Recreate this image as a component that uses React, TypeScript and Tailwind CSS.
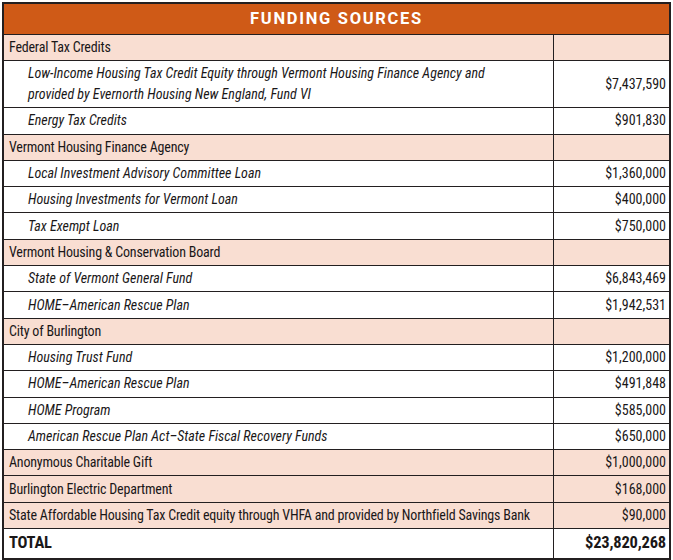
type Row = {
  label: string;
  amount?: string;
  kind: "group" | "item" | "solo";
  tall?: boolean;
};

const rows: Row[] = [
  { label: "Federal Tax Credits", kind: "group" },
  {
    label:
      "Low-Income Housing Tax Credit Equity through Vermont Housing Finance Agency and provided by Evernorth Housing New England, Fund VI",
    amount: "$7,437,590",
    kind: "item",
    tall: true,
  },
  { label: "Energy Tax Credits", amount: "$901,830", kind: "item" },
  { label: "Vermont Housing Finance Agency", kind: "group" },
  { label: "Local Investment Advisory Committee Loan", amount: "$1,360,000", kind: "item" },
  { label: "Housing Investments for Vermont Loan", amount: "$400,000", kind: "item" },
  { label: "Tax Exempt Loan", amount: "$750,000", kind: "item" },
  { label: "Vermont Housing & Conservation Board", kind: "group" },
  { label: "State of Vermont General Fund", amount: "$6,843,469", kind: "item" },
  { label: "HOME\u2013American Rescue Plan", amount: "$1,942,531", kind: "item" },
  { label: "City of Burlington", kind: "group" },
  { label: "Housing Trust Fund", amount: "$1,200,000", kind: "item" },
  { label: "HOME\u2013American Rescue Plan", amount: "$491,848", kind: "item" },
  { label: "HOME Program", amount: "$585,000", kind: "item" },
  { label: "American Rescue Plan Act\u2013State Fiscal Recovery Funds", amount: "$650,000", kind: "item" },
  { label: "Anonymous Charitable Gift", amount: "$1,000,000", kind: "solo" },
  { label: "Burlington Electric Department", amount: "$168,000", kind: "solo" },
  {
    label: "State Affordable Housing Tax Credit equity through VHFA and provided by Northfield Savings Bank",
    amount: "$90,000",
    kind: "solo",
  },
];

function FundingRow({ row }: { row: Row }) {
  const pink = row.kind !== "item";
  return (
    <div
      className={`flex border-b border-[#231f20] ${row.tall ? "h-[47px]" : "h-[26.3px]"} ${
        pink ? "bg-[#f9ded2]" : "bg-white"
      }`}
    >
      <div
        className={`flex-1 flex items-center border-r border-[#231f20] ${
          row.kind === "item" ? "pl-[24px] italic" : "pl-[5px] tracking-[-0.2px]"
        } ${row.tall ? "pr-[60px] leading-[21px]" : ""}`}
      >
        {row.label}
      </div>
      <div className="w-[115px] flex items-center justify-end pr-[3px]">{row.amount}</div>
    </div>
  );
}

export default function App() {
  return (
    <div className="bg-white w-[673px] h-[560px] pt-[2px] pl-[2px]">
      <div className="w-[669px] border-2 border-[#231f20] text-[14px] text-[#1a1718] font-['Roboto_Condensed',sans-serif]">
        <div className="h-[31px] bg-[#cf5a17] border-b border-[#231f20] flex items-center justify-center text-white font-['Roboto',sans-serif] font-bold text-[16.5px] tracking-[1.7px]">
          FUNDING SOURCES
        </div>
        {rows.map((r, i) => (
          <FundingRow key={i} row={r} />
        ))}
        <div className="flex h-[29px] font-bold text-[16.5px] tracking-[-0.2px]">
          <div className="flex-1 flex items-center pl-[5px] border-r border-[#231f20]">TOTAL</div>
          <div className="w-[115px] flex items-center justify-end pr-[3px]">$23,820,268</div>
        </div>
      </div>
    </div>
  );
}
